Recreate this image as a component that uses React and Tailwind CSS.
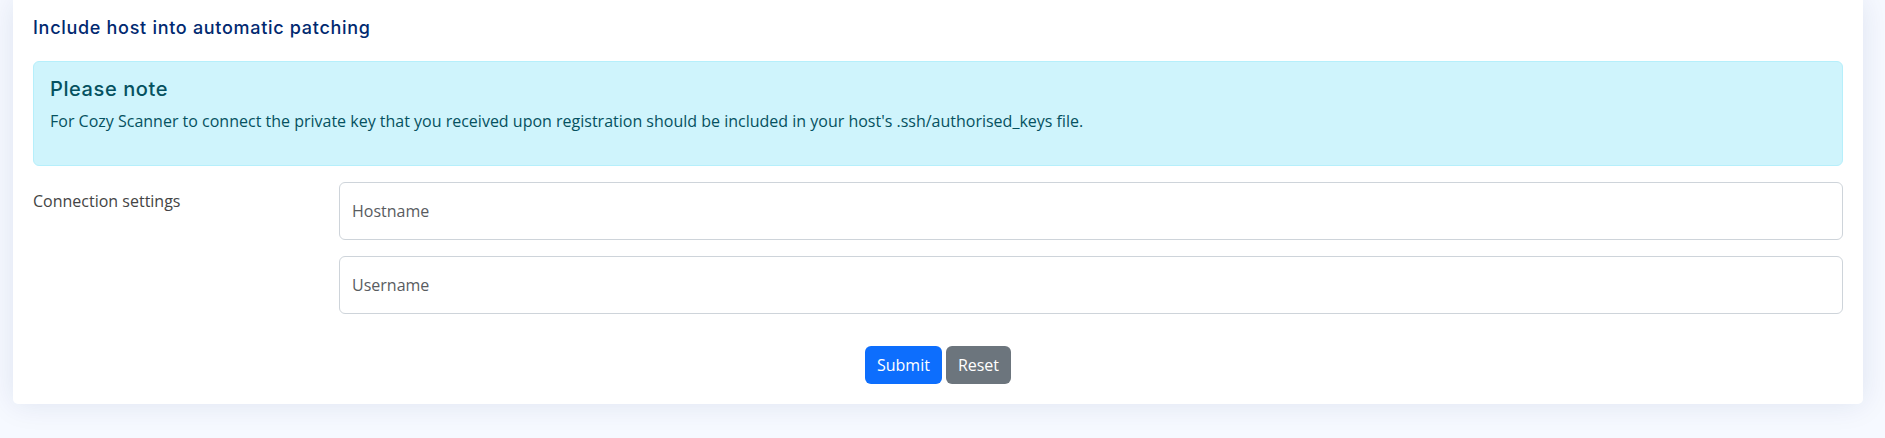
import React from 'react';

const heading = { fontFamily: 'Inter, "Noto Sans", sans-serif' };

const App = () => {
  const [hostname, setHostname] = React.useState('');
  const [username, setUsername] = React.useState('');

  return (
    <div
      className="min-h-[438px] bg-[#f6f9ff] pl-[13px] pr-[22px] text-[#444444]"
      style={{ fontFamily: '"Open Sans", "Noto Sans", sans-serif' }}
    >
      <div className="bg-white rounded-b-[5px] shadow-[0_0_30px_rgba(1,41,112,0.1)] px-5 pb-5">
        <h5
          style={heading}
          className="pt-[17px] pb-[22px] text-[18px] leading-[22px] font-medium tracking-[0.7px] text-[#012970]"
        >
          Include host into automatic patching
        </h5>

        <div className="border border-[#b6effb] bg-[#cff4fc] text-[#055160] rounded-[6px] p-4">
          <h4 style={heading} className="text-[20px] leading-[23px] font-medium tracking-[0.6px] mb-2">
            Please note
          </h4>
          <p className="text-[16px] leading-6 mb-4">
            For Cozy Scanner to connect the private key that you received upon registration should be
            included in your host's .ssh/authorised_keys file.
          </p>
        </div>

        <form onSubmit={(e) => e.preventDefault()} className="mt-4">
          <div className="flex">
            <label className="w-[306px] shrink-0 pt-[7px] text-[16px] leading-6">Connection settings</label>
            <div className="flex-1 flex flex-col gap-4">
              <input
                type="text"
                placeholder="Hostname"
                value={hostname}
                onChange={(e) => setHostname(e.target.value)}
                className="h-[58px] w-full border border-[#ced4da] rounded-[6px] px-3 text-[16px] text-[#212529] placeholder:text-[#595c5f] outline-none"
              />
              <input
                type="text"
                placeholder="Username"
                value={username}
                onChange={(e) => setUsername(e.target.value)}
                className="h-[58px] w-full border border-[#ced4da] rounded-[6px] px-3 text-[16px] text-[#212529] placeholder:text-[#595c5f] outline-none"
              />
            </div>
          </div>

          <div className="flex justify-center gap-1 mt-8">
            <button className="bg-[#0d6efd] text-white text-[16px] leading-6 px-3 py-[7px] rounded-[6px]">
              Submit
            </button>
            <button
              type="reset"
              onClick={() => {
                setHostname('');
                setUsername('');
              }}
              className="bg-[#6c757d] text-white text-[16px] leading-6 px-3 py-[7px] rounded-[6px]"
            >
              Reset
            </button>
          </div>
        </form>
      </div>
    </div>
  );
};

export default App;
